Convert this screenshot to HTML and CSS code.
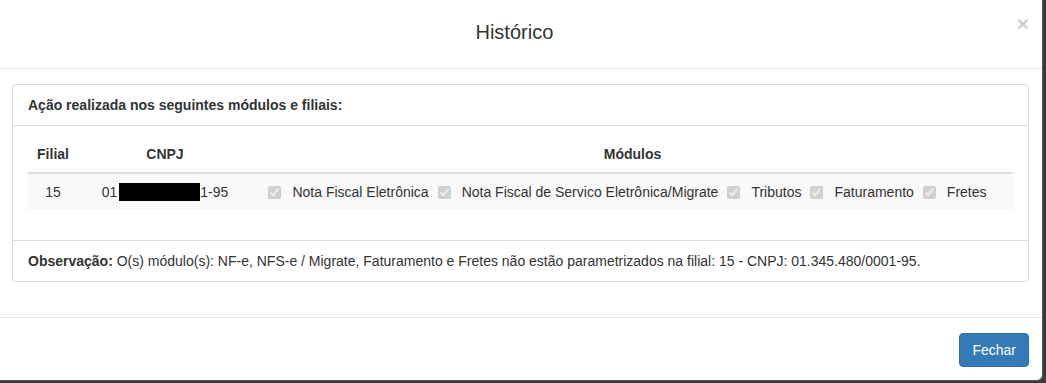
FILE: index.html
```html
<!DOCTYPE html>
<html lang="pt-BR">
<head>
    <meta charset="UTF-8">
    <title>Histórico</title>
    <link rel="stylesheet" href="styles.css">
</head>
<body>

    <div class="modal-content">
        <!-- Cabeçalho -->
        <div class="modal-header">
            <h4 class="modal-title">Histórico</h4>
            <button type="button" class="close">&times;</button>
        </div>

        <div class="modal-body">
            <div class="panel">
                <div class="panel-heading">Ação realizada nos seguintes módulos e filiais:</div>
                <div class="panel-body">
                    <table class="table">
                        <thead>
                            <tr>
                                <th class="col-filial">Filial</th>
                                <th class="col-cnpj">CNPJ</th>
                                <th>Módulos</th>
                            </tr>
                        </thead>
                        <tbody>
                            <tr>
                                <td>15</td>
                                <td>01<span class="redacted"></span>1-95</td>
                                <td>
                                    <div class="modules">
                                        <label class="module"><input type="checkbox" checked disabled>Nota Fiscal Eletrônica</label>
                                        <label class="module"><input type="checkbox" checked disabled>Nota Fiscal de Servico Eletrônica/Migrate</label>
                                        <label class="module"><input type="checkbox" checked disabled>Tributos</label>
                                        <label class="module"><input type="checkbox" checked disabled>Faturamento</label>
                                        <label class="module"><input type="checkbox" checked disabled>Fretes</label>
                                    </div>
                                </td>
                            </tr>
                        </tbody>
                    </table>
                </div>
                <div class="panel-note">
                    <strong>Observação:</strong> O(s) módulo(s): NF-e, NFS-e / Migrate, Faturamento e Fretes não estão parametrizados na filial: 15 - CNPJ: 01.345.480/0001-95.
                </div>
            </div>
        </div>

        <div class="modal-footer">
            <button type="button" class="btn btn-primary">Fechar</button>
        </div>
    </div>

</body>
</html>
```

FILE: styles.css
```css
/* Variáveis */
:root {
    --text-color: #333333;
    --border-light: #e5e5e5;
    --border-color: #dddddd;
    --stripe-color: #f9f9f9;
    --primary: #337ab7;
    --primary-border: #2e6da4;
    --backdrop: #3a3a3a;
}

* {
    margin: 0;
    padding: 0;
    box-sizing: border-box;
}

body {
    font-family: "Liberation Sans", Arial, sans-serif;
    font-size: 14px;
    line-height: 20px;
    color: var(--text-color);
    background-color: var(--backdrop);
    height: 383px;
    overflow: hidden;
}

.modal-content {
    width: 1043px;
    background-color: #ffffff;
    border-right: 1px solid #555;
    border-bottom: 1px solid #555;
    border-radius: 0 0 6px 0;
}

/* Cabeçalho */
.modal-header {
    display: grid;
    grid-template-columns: 1fr auto;
    height: 69px;
    padding: 22px 13px 0 12px;
    border-bottom: 1px solid var(--border-light);
}

.modal-title {
    font-size: 20px;
    font-weight: normal;
    line-height: 20px;
    text-align: center;
}

.close {
    align-self: start;
    margin-top: -9px;
    background: none;
    border: none;
    font-family: inherit;
    font-size: 21px;
    font-weight: bold;
    line-height: 21px;
    color: #000;
    opacity: 0.2;
}

/* Corpo */
.modal-body {
    padding: 15px 13px 35px 12px;
}

.panel {
    border: 1px solid var(--border-color);
    border-radius: 4px;
}

.panel-heading {
    padding: 10px 15px;
    font-weight: bold;
    border-bottom: 1px solid var(--border-color);
}

.panel-body {
    padding: 10px 15px 30px;
}

.panel-note {
    padding: 10px 15px;
    border-top: 1px solid var(--border-color);
}

.table {
    width: 100%;
    border-collapse: collapse;
}

.table th,
.table td {
    padding: 8px;
    text-align: center;
    vertical-align: middle;
}

.table th {
    font-weight: bold;
    border-bottom: 2px solid var(--border-color);
}

.table tbody tr {
    background-color: var(--stripe-color);
}

.col-filial {
    width: 50px;
}

.col-cnpj {
    width: 174px;
}

.redacted {
    display: inline-block;
    width: 81px;
    height: 18px;
    margin-left: 2px;
    vertical-align: -4px;
    background-color: #000;
}

.modules {
    display: flex;
    justify-content: center;
    gap: 9px;
    padding-right: 10px;
}

.module {
    display: flex;
    align-items: center;
}

.module input {
    width: 13px;
    height: 13px;
    margin: 0 11px 0 0;
}

/* Rodapé */
.modal-footer {
    display: flex;
    justify-content: flex-end;
    padding: 15px 13px 13px;
    border-top: 1px solid var(--border-light);
}

.btn {
    padding: 6px 12px;
    font-family: inherit;
    font-size: 14px;
    line-height: 20px;
    border: 1px solid transparent;
    border-radius: 4px;
    cursor: pointer;
}

.btn-primary {
    color: #ffffff;
    background-color: var(--primary);
    border-color: var(--primary-border);
}
```
